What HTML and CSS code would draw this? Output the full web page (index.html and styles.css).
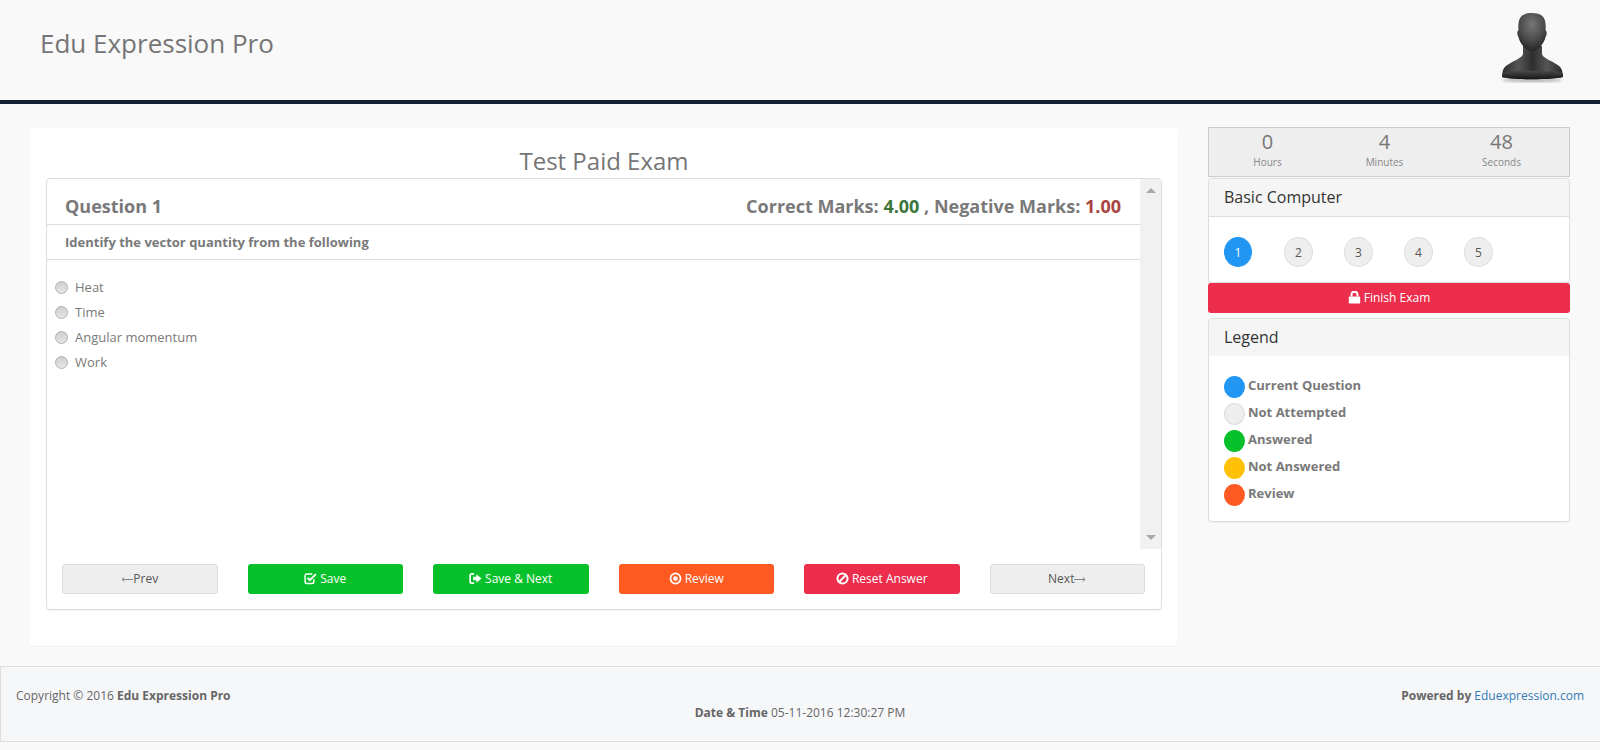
FILE: index.html
```html
<!DOCTYPE html>
<html lang="en">
<head>
<meta charset="utf-8">
<title>Edu Expression Pro</title>
<link rel="stylesheet" href="styles.css">
</head>
<body>
<header class="topbar">
  <div class="brand">Edu Expression Pro</div>
  <svg class="avatar" width="70" height="76" viewBox="0 0 70 76" aria-hidden="true">
    <defs>
      <radialGradient id="headGrad" cx="0.5" cy="0.3" r="0.75">
        <stop offset="0" stop-color="#757575"/>
        <stop offset="0.55" stop-color="#4c4c4c"/>
        <stop offset="1" stop-color="#1e1e1e"/>
      </radialGradient>
      <linearGradient id="bodyGrad" x1="0" y1="0" x2="1" y2="0">
        <stop offset="0" stop-color="#2c2c2c"/>
        <stop offset="0.27" stop-color="#555"/>
        <stop offset="0.5" stop-color="#2e2e2e"/>
        <stop offset="0.73" stop-color="#555"/>
        <stop offset="1" stop-color="#2c2c2c"/>
      </linearGradient>
      <linearGradient id="baseGrad" x1="0" y1="0" x2="0" y2="1">
        <stop offset="0" stop-color="#4a4a4a"/>
        <stop offset="1" stop-color="#151515"/>
      </linearGradient>
      <filter id="soft"><feGaussianBlur stdDeviation="1.5"/></filter>
    </defs>
    <ellipse cx="36" cy="70" rx="30" ry="2.500" fill="#bbb" filter="url(#soft)"/>
    <path d="M27 36 L27 44 C26 48 19 50 13 54 C8 57 7 59 6.500 63 L6 67 C16 70 56 70 67 67 L66.500 63 C66 59 65 57 60 54 C54 50 47 48 46 44 L46 36 Z" fill="url(#bodyGrad)"/>
    <path d="M6.300 63 C18 60 54 60 66.700 63 L67 67 C56 70 16 70 6 67 Z" fill="url(#baseGrad)"/>
    <path d="M22.500 20 C21.500 8 25 3 36 3 C47 3 50.500 8 49.500 20 C51 21 51 25 49.500 27 C48.500 33 42 41 36 41 C30 41 23.500 33 22.500 27 C21 25 21 21 22.500 20 Z" fill="url(#headGrad)"/>
  </svg>
</header>

<main class="layout">
  <section class="exam-card">
    <h1 class="exam-title">Test Paid Exam</h1>
    <div class="question-panel">
      <div class="scroll-box">
        <div class="question-content">
          <div class="question-head">
            <span>Question 1</span>
            <span>Correct Marks: <span class="good">4.00</span> , Negative Marks: <span class="bad">1.00</span></span>
          </div>
          <div class="question-text">Identify the vector quantity from the following</div>
          <ul class="options">
            <li><span class="radio"></span>Heat</li>
            <li><span class="radio"></span>Time</li>
            <li><span class="radio"></span>Angular momentum</li>
            <li><span class="radio"></span>Work</li>
          </ul>
        </div>
        <div class="scrollbar">
          <span class="arrow-up"></span>
          <span class="arrow-down"></span>
        </div>
      </div>
      <div class="actions">
        <button class="btn btn-plain">
          <svg class="arr" viewBox="0 0 12 7"><path d="M12 3.500H1M3.200 1.500L1 3.500L3.200 5.500" fill="none" stroke="#777" stroke-width="0.900"/></svg>
          Prev</button>
        <button class="btn btn-green">
          <svg class="icon" viewBox="0 0 14 14"><path d="M10.600 7.800V10.600A1.900 1.900 0 0 1 8.700 12.500H3.100A1.900 1.900 0 0 1 1.200 10.600V4.100A1.900 1.900 0 0 1 3.100 2.200H9" fill="none" stroke="#fff" stroke-width="1.600"/><path d="M3.800 6.300L6.300 8.800L12.800 2.300" fill="none" stroke="#fff" stroke-width="2.200"/></svg>
          Save</button>
        <button class="btn btn-green">
          <svg class="icon" viewBox="0 0 14 14"><path d="M5.500 2H3A1.800 1.800 0 0 0 1.200 3.800V10.200A1.800 1.800 0 0 0 3 12H5.500" fill="none" stroke="#fff" stroke-width="1.800"/><path d="M4.500 5.200H8V2.500L13.500 7L8 11.500V8.800H4.500Z" fill="#fff"/></svg>
          Save &amp; Next</button>
        <button class="btn btn-orange">
          <svg class="icon" viewBox="0 0 14 14"><circle cx="7" cy="7" r="5.400" fill="none" stroke="#fff" stroke-width="1.900"/><circle cx="7" cy="7" r="2.500" fill="#fff"/></svg>
          Review</button>
        <button class="btn btn-red">
          <svg class="icon" viewBox="0 0 14 14"><circle cx="7" cy="7" r="5.400" fill="none" stroke="#fff" stroke-width="2.200"/><path d="M3.300 10.700L10.700 3.300" stroke="#fff" stroke-width="2.200"/></svg>
          Reset Answer</button>
        <button class="btn btn-plain">Next
          <svg class="arr" viewBox="0 0 12 7"><path d="M0 3.500H11M8.800 1.500L11 3.500L8.800 5.500" fill="none" stroke="#777" stroke-width="0.900"/></svg>
        </button>
      </div>
    </div>
  </section>

  <aside class="sidebar">
    <div class="timer">
      <div class="timer-cell"><span class="timer-num">0</span><span class="timer-label">Hours</span></div>
      <div class="timer-cell"><span class="timer-num">4</span><span class="timer-label">Minutes</span></div>
      <div class="timer-cell"><span class="timer-num">48</span><span class="timer-label">Seconds</span></div>
    </div>
    <div class="side-panel">
      <div class="side-head side-head-line">Basic Computer</div>
      <div class="numbers">
        <span class="num num-current">1</span>
        <span class="num">2</span>
        <span class="num">3</span>
        <span class="num">4</span>
        <span class="num">5</span>
      </div>
    </div>
    <button class="finish">
      <svg class="icon" viewBox="0 0 13 13"><path d="M3.500 5.500V3.700A3 3 0 0 1 9.500 3.700V5.500" fill="none" stroke="#fff" stroke-width="2"/><rect x="0.800" y="5.500" width="11.400" height="7" rx="0.800" fill="#fff"/></svg>
      Finish Exam</button>
    <div class="side-panel legend-panel">
      <div class="side-head">Legend</div>
      <ul class="legend">
        <li><span class="dot dot-blue"></span>Current Question</li>
        <li><span class="dot dot-grey"></span>Not Attempted</li>
        <li><span class="dot dot-green"></span>Answered</li>
        <li><span class="dot dot-yellow"></span>Not Answered</li>
        <li><span class="dot dot-orange"></span>Review</li>
      </ul>
    </div>
  </aside>
</main>

<footer class="footer">
  <div class="foot-left">Copyright © 2016 <b>Edu Expression Pro</b></div>
  <div class="foot-center"><b>Date &amp; Time</b> 05-11-2016 12:30:27 PM</div>
  <div class="foot-right"><b>Powered by</b> <a href="#">Eduexpression.com</a></div>
</footer>
</body>
</html>
```

FILE: styles.css
```css
* { box-sizing: border-box; }
html, body { margin: 0; padding: 0; height: 750px; overflow: hidden; }
body {
  background: #f9f9f9;
  color: #797979;
  font-family: "Open Sans", "Liberation Sans", sans-serif;
  font-size: 13px;
}
.topbar {
  height: 104px;
  border-bottom: 4px solid #141e35;
  display: flex;
  justify-content: space-between;
  align-items: flex-start;
  padding: 10px 34px 0 40px;
}
.brand { font-size: 26px; line-height: 66px; color: #757575; }
.avatar { display: block; }

.layout {
  display: flex;
  align-items: flex-start;
  padding: 23px 30px 0 30px;
  gap: 31px;
}
.exam-card {
  width: 1147px;
  height: 518px;
  margin-top: 1px;
  background: #fff;
  border-radius: 4px;
  box-shadow: 0 1px 1px rgba(0,0,0,.04);
  padding: 17px 15px 0 16px;
  display: flex;
  flex-direction: column;
}
.exam-title {
  margin: 0 0 2px;
  font-size: 24px;
  font-weight: 400;
  line-height: 31px;
  text-align: center;
  color: #757575;
}
.question-panel {
  height: 432px;
  border: 1px solid #ddd;
  border-radius: 4px;
  box-shadow: 0 1px 1px rgba(0,0,0,.05);
}
.scroll-box { display: flex; height: 370px; }
.question-content { flex: 1; }
.question-head {
  height: 46px;
  padding: 14px 19px 0 18px;
  display: flex;
  justify-content: space-between;
  font-size: 18px;
  line-height: 26px;
  font-weight: 700;
  border-bottom: 1px solid #ddd;
}
.good { color: #3c763d; }
.bad { color: #a94442; }
.question-text {
  height: 35px;
  padding-left: 18px;
  font-size: 13px;
  font-weight: 700;
  line-height: 34px;
  border-bottom: 1px solid #ddd;
}
.options { list-style: none; margin: 0; padding: 14px 0 0 8px; }
.options li { height: 25px; display: flex; align-items: center; gap: 7px; }
.radio {
  width: 13px;
  height: 13px;
  margin-top: 2px;
  border-radius: 50%;
  border: 1px solid #b0b0b0;
  background: linear-gradient(#cfcfcf, #e6e6e6);
}
.scrollbar {
  width: 21px;
  background: #f1f1f1;
  display: flex;
  flex-direction: column;
  justify-content: space-between;
  align-items: center;
  padding: 9px 0 9px;
}
.arrow-up { border: 5px solid transparent; border-top: 0; border-bottom: 5px solid #a8a8a8; }
.arrow-down { border: 5px solid transparent; border-bottom: 0; border-top: 5px solid #a8a8a8; }

.actions {
  display: grid;
  grid-template-columns: repeat(6, 1fr);
  gap: 30px;
  padding: 15px 16px 0 15px;
}
.btn, .finish {
  height: 30px;
  border: 1px solid transparent;
  border-radius: 3px;
  font-family: inherit;
  font-size: 12px;
  line-height: 16px;
  color: #fff;
  display: flex;
  align-items: center;
  justify-content: center;
  gap: 3px;
  padding: 0 0 1px;
}
.btn-plain { background: #eee; border-color: #ddd; color: #555; gap: 0; }
.btn-green { background: #08c12a; }
.btn-orange { background: #ff5a22; }
.btn-red { background: #ec2d4c; }
.icon { width: 13px; height: 13px; display: block; }
.arr { width: 12px; height: 7px; display: block; margin-top: 2px; }

.sidebar { width: 362px; display: flex; flex-direction: column; }
.timer {
  height: 50px;
  background: #eee;
  border: 1px solid #ccc;
  display: grid;
  grid-template-columns: repeat(3, 117px);
  margin-bottom: 1px;
}
.timer-cell { display: flex; flex-direction: column; align-items: center; }
.timer-num { font-size: 20px; line-height: 27px; color: #777; }
.timer-label { font-size: 10px; line-height: 13px; margin-top: 1px; color: #888; }
.side-panel {
  background: #fff;
  border: 1px solid #ddd;
  border-radius: 4px;
  box-shadow: 0 1px 1px rgba(0,0,0,.05);
  overflow: hidden;
}
.side-head {
  height: 37px;
  background: #f5f5f5;
  color: #333;
  font-size: 16px;
  line-height: 36px;
  padding-left: 15px;
}
.side-head-line { height: 38px; border-bottom: 1px solid #ddd; }
.numbers { height: 65px; padding: 20px 15px 0; display: flex; gap: 31px; }
.num {
  width: 29px;
  height: 30px;
  border-radius: 50%;
  background: #eee;
  border: 1px solid #ddd;
  color: #555;
  font-size: 12px;
  display: flex;
  align-items: center;
  justify-content: center;
}
.num-current { width: 28px; margin-right: 1px; background: #2196f3; border-color: #2196f3; color: #fff; }
.finish { width: 100%; background: #ec2d4c; margin-bottom: 5px; }
.legend-panel { height: 204px; }
.legend { list-style: none; margin: 0; padding: 20px 15px 0; }
.legend li {
  height: 27px;
  display: flex;
  align-items: flex-start;
  gap: 3px;
  font-weight: 700;
  line-height: 18px;
}
.dot { width: 21px; height: 22px; border-radius: 50%; flex: none; }
.dot-blue { background: #2196f3; }
.dot-grey { background: #eee; border: 1px solid #ddd; }
.dot-green { background: #08c12a; }
.dot-yellow { background: #ffc107; }
.dot-orange { background: #ff5a22; }

.footer {
  position: absolute;
  left: 0; right: 0;
  top: 666px;
  height: 76px;
  background: #f6f7f9;
  border: 1px solid #ddd;
  border-right: 0;
  font-size: 12px;
  color: #666;
  display: grid;
  grid-template-columns: 1fr 1fr 1fr;
  padding: 20px 16px 0 15px;
  line-height: 18px;
}
.foot-center { text-align: center; padding-top: 17px; }
.foot-right { text-align: right; }
a { color: #337ab7; text-decoration: none; }
```
